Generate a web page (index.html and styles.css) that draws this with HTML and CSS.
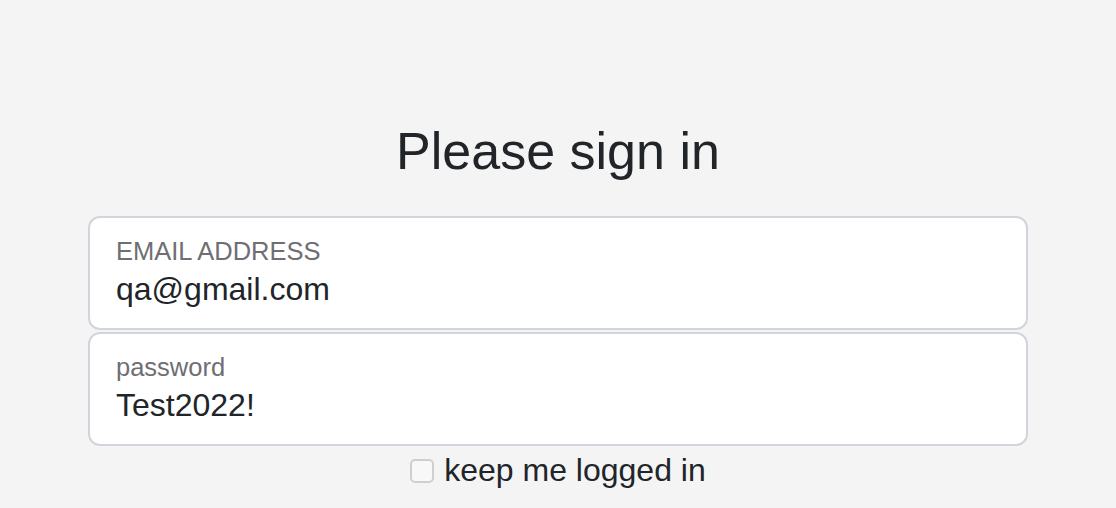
FILE: index.html
```html
<!DOCTYPE html>
<html lang="en">
<head>
    <meta charset="UTF-8">
    <meta name="viewport" content="width=device-width, initial-scale=1.0">
    <title>Sign in</title>
    <link rel="stylesheet" href="styles.css">
</head>
<body>
    <main class="signin">
        <h1 class="title">Please sign in</h1>
        <form class="form">
            <div class="field">
                <label class="field-label" for="email">EMAIL ADDRESS</label>
                <input class="field-input" id="email" type="text" value="qa@gmail.com">
            </div>
            <div class="field">
                <label class="field-label" for="password">password</label>
                <input class="field-input" id="password" type="text" value="Test2022!">
            </div>
            <label class="remember">
                <input class="remember-box" type="checkbox">
                <span>keep me logged in</span>
            </label>
        </form>
    </main>
</body>
</html>
```

FILE: styles.css
```css
body {
    margin: 0;
    background-color: #f4f4f4;
    font-family: "Liberation Sans", Arial, Helvetica, sans-serif;
    color: #212529;
}

.signin {
    padding-top: 121px;
}

.title {
    margin: 0 0 35px;
    font-size: 52px;
    font-weight: 400;
    line-height: 60px;
    text-align: center;
}

.form {
    width: 940px;
    margin: 0 auto;
    display: flex;
    flex-direction: column;
    gap: 2px;
}

.field {
    background: #fff;
    border: 2px solid #d1d5db;
    border-radius: 12px;
    padding: 18px 26px 20px;
    height: 72px;
    display: flex;
    flex-direction: column;
    gap: 5px;
}

.field-label {
    font-size: 25.5px;
    line-height: 30px;
    color: #6e6e73;
}

.field-input {
    border: none;
    outline: none;
    padding: 0;
    margin: 0;
    background: transparent;
    font-family: inherit;
    font-size: 32px;
    line-height: 37px;
    height: 37px;
    color: #212529;
}

.remember {
    display: flex;
    justify-content: center;
    align-items: center;
    gap: 10px;
    margin-top: 4px;
    font-size: 32px;
    line-height: 37px;
}

.remember-box {
    appearance: none;
    width: 24px;
    height: 24px;
    margin: 0;
    border: 2px solid #cfcfcf;
    border-radius: 5px;
    background: #f8f8f8;
}
```
